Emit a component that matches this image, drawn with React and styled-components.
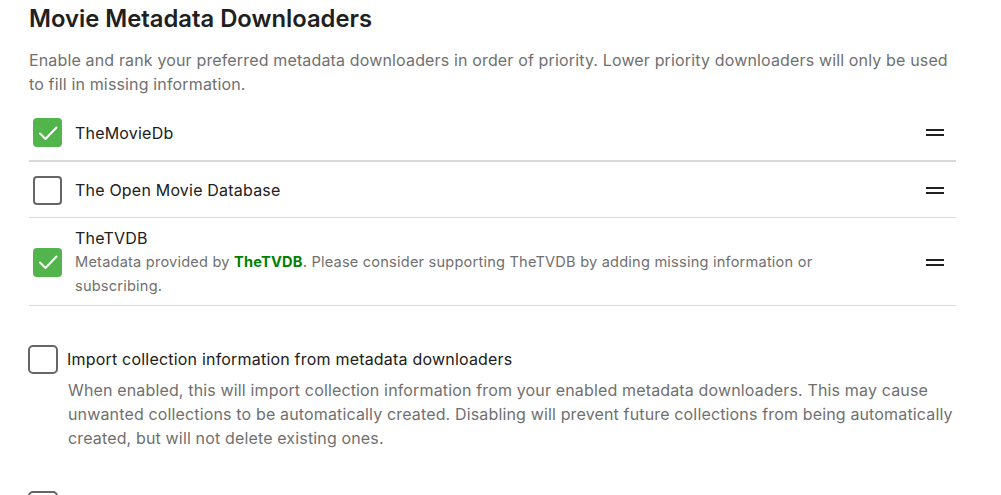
import React from "react";
import styled, { createGlobalStyle } from "styled-components";

const Global = createGlobalStyle`
  html, body { margin: 0; padding: 0; background: #fff; }
  body { font-family: Inter, "Noto Sans", sans-serif; color: #202020; }
  * { box-sizing: border-box; }
`;

const Page = styled.div`
  padding: 0 45px 0 29px;
  width: 1001px;
  height: 495px;
  overflow: hidden;
`;

const Heading = styled.h2`
  margin: 0;
  padding-top: 4px;
  font-size: 23.8px;
  line-height: 29px;
  font-weight: 600;
  color: #202020;
`;

const Intro = styled.p`
  margin: 15px 0 8px;
  font-size: 16px;
  line-height: 24px;
  letter-spacing: 0.15px;
  color: #707070;
`;

const List = styled.div`
  display: flex;
  flex-direction: column;
`;

const Row = styled.div`
  display: flex;
  align-items: center;
  gap: 13px;
  min-height: ${(p) => (p.$first ? "58px" : "56px")};
  padding: 8px 12px 7px 4px;
  border-bottom: ${(p) => (p.$first ? "2px" : "1px")} solid #dadada;
`;

const Box = styled.span`
  flex: none;
  width: 29px;
  height: 29px;
  border-radius: 4px;
  display: flex;
  align-items: center;
  justify-content: center;
  background: ${(p) => (p.$checked ? "#52b54b" : "#fff")};
  border: ${(p) => (p.$checked ? "none" : "2px solid #666")};
`;

const RowBody = styled.div`
  flex: 1;
  display: flex;
  flex-direction: column;
`;

const RowTitle = styled.div`
  font-size: 16px;
  line-height: 24px;
  letter-spacing: 0.2px;
  color: #202020;
`;

const RowSub = styled.div`
  font-size: 14.6px;
  line-height: 24px;
  letter-spacing: 0.2px;
  color: #707070;
  padding-right: 90px;
`;

const Link = styled.a`
  color: #008000;
  font-weight: 700;
  text-decoration: none;
`;

const Handle = styled.span`
  flex: none;
  width: 18px;
  height: 7px;
  border-top: 2px solid #202020;
  border-bottom: 2px solid #202020;
`;

const Option = styled.div`
  margin-top: ${(p) => p.$top || "40px"};
  display: grid;
  grid-template-columns: 30px 1fr;
  column-gap: 9px;
  margin-left: -1px;
`;

const OptionBox = styled.span`
  width: 30px;
  height: 29px;
  border: 2px solid #666;
  border-radius: 5px;
  background: #fff;
`;

const OptionLabel = styled.div`
  font-size: 16px;
  line-height: 29px;
  letter-spacing: 0.2px;
  color: #202020;
`;

const OptionDesc = styled.div`
  grid-column: 2;
  margin-top: 4px;
  padding-left: 1px;
  font-size: 16px;
  line-height: 24px;
  letter-spacing: 0.15px;
  color: #707070;
`;

const Check = () => (
  <svg width="20" height="16" viewBox="0 0 20 16" fill="none">
    <path d="M2 8.5 L7.5 14 L18.5 2.5" stroke="#fff" strokeWidth="2" strokeLinecap="round" strokeLinejoin="round" />
  </svg>
);

const downloaders = [
  { name: "TheMovieDb", checked: true },
  { name: "The Open Movie Database", checked: false },
  { name: "TheTVDB", checked: true, tvdb: true },
];

export default function App() {
  return (
    <>
      <Global />
      <Page>
        <Heading>Movie Metadata Downloaders</Heading>
        <Intro>
          Enable and rank your preferred metadata downloaders in order of priority. Lower priority downloaders will only be used to fill in missing information.
        </Intro>
        <List>
          {downloaders.map((d, i) => (
            <Row key={d.name} $first={i === 0}>
              <Box $checked={d.checked}>{d.checked && <Check />}</Box>
              <RowBody>
                <RowTitle>{d.name}</RowTitle>
                {d.tvdb && (
                  <RowSub>
                    Metadata provided by <Link href="#">TheTVDB</Link>. Please consider supporting TheTVDB by adding missing information or subscribing.
                  </RowSub>
                )}
              </RowBody>
              <Handle />
            </Row>
          ))}
        </List>
        <Option $top="39px">
          <OptionBox />
          <OptionLabel>Import collection information from metadata downloaders</OptionLabel>
          <OptionDesc>
            When enabled, this will import collection information from your enabled metadata downloaders. This may cause unwanted collections to be automatically created. Disabling will prevent future collections from being automatically created, but will not delete existing ones.
          </OptionDesc>
        </Option>
        <Option $top="41px">
          <OptionBox />
          <OptionLabel>Automatically add to collection</OptionLabel>
        </Option>
      </Page>
    </>
  );
}
